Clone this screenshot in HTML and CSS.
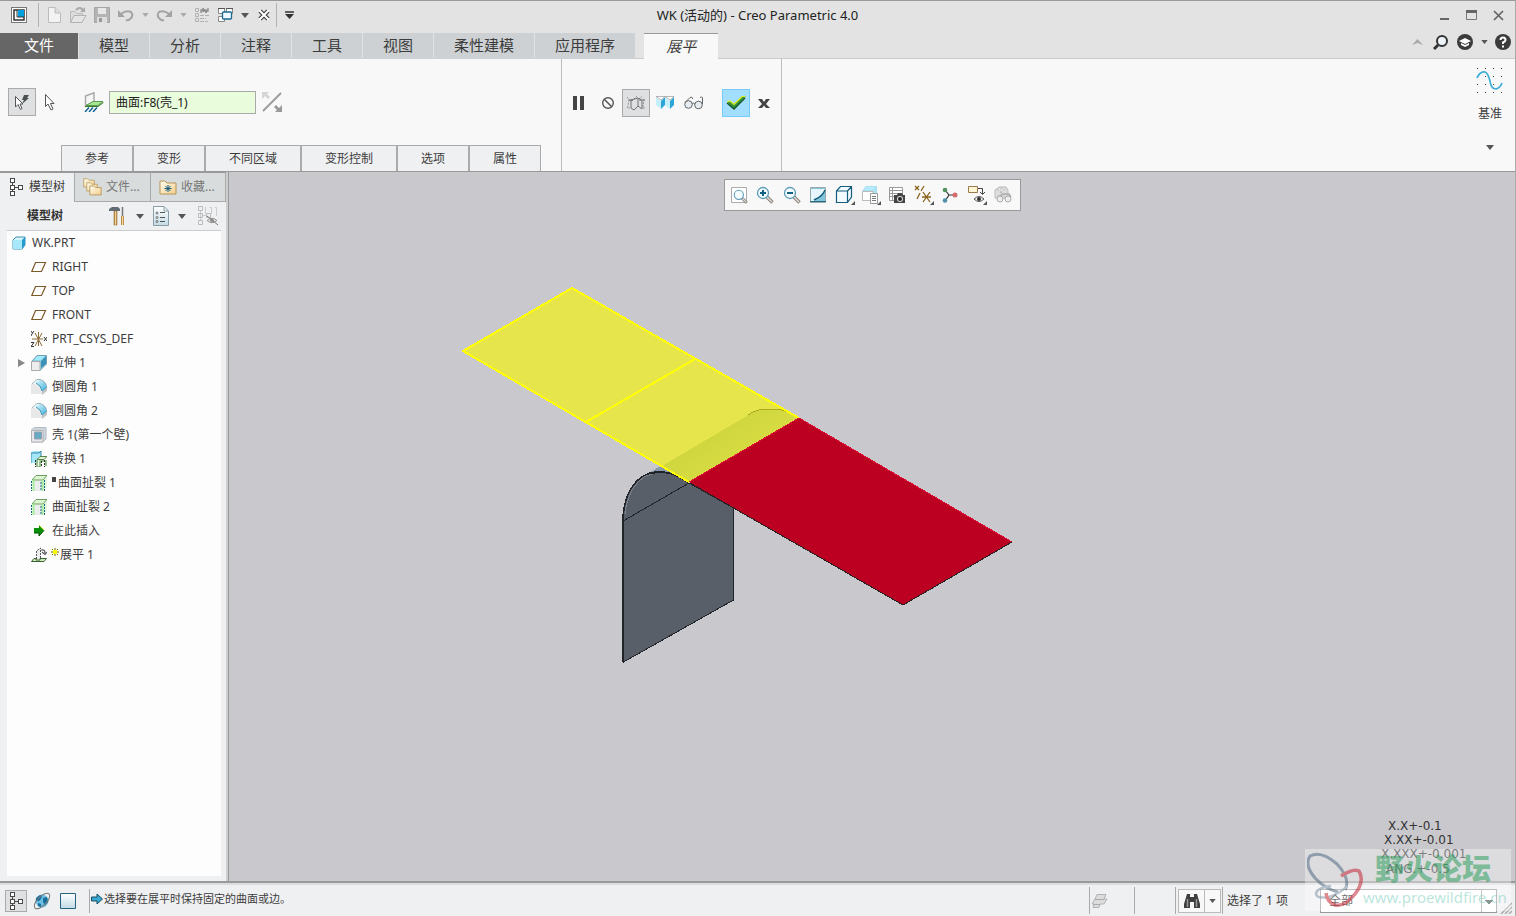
FILE: index.html
```html
<!DOCTYPE html>
<html lang="zh-CN">
<head>
<meta charset="utf-8">
<title>WK (活动的) - Creo Parametric 4.0</title>
<link rel="stylesheet" href="styles.css">
</head>
<body>
<svg class="symbols" aria-hidden="true">
  <defs>
    <linearGradient id="sky" x1="0" y1="0" x2="1" y2="1"><stop offset="0" stop-color="#e8fbff"/><stop offset="1" stop-color="#3bb0dc"/></linearGradient>
    <linearGradient id="gold" x1="0" y1="0" x2="1" y2="1"><stop offset="0" stop-color="#fffdf0"/><stop offset="1" stop-color="#f3ce8a"/></linearGradient>
    <linearGradient id="pale" x1="0" y1="0" x2="0" y2="1"><stop offset="0" stop-color="#ffffff"/><stop offset="1" stop-color="#c3dbe5"/></linearGradient>
    <linearGradient id="wood" x1="0" y1="0" x2="1" y2="0"><stop offset="0" stop-color="#9c6a25"/><stop offset=".5" stop-color="#f5d59b"/><stop offset="1" stop-color="#a8742e"/></linearGradient>
    <symbol id="down" viewBox="0 0 8 5"><path d="M0 0H8L4 5Z" fill="currentColor"/></symbol>
    <symbol id="tree" viewBox="0 0 16 20"><g fill="#fff" stroke="#484848"><path d="M4.500 4V16M6 10.500H11"/><rect x="2.500" y="1.500" width="4" height="4"/><rect x="2.500" y="8.500" width="4" height="4"/><rect x="10.500" y="8.500" width="4" height="4"/><rect x="2.500" y="14.500" width="4" height="4"/></g></symbol>
    <symbol id="plane" viewBox="0 0 16 16"><path d="M4.500 3.500H14.500L10.500 12.500H.8Z" fill="none" stroke="#7b5b2c" stroke-width="1.200"/></symbol>
    <symbol id="round" viewBox="0 0 16 16"><path d="M0 5H6Q11 7 11 15H0Z" fill="#e8e8e8"/><path d="M11 12L16 8V12L11 16Z" fill="#c4c4c4"/><path d="M4 4L8 .5Q15 1 16 8L11 12Q10 6 4 4" fill="url(#sky)"/><path d="M1 5L6 .5H9Q15 2 15.500 8" fill="none" stroke="#9db2ba"/><path d="M5 4Q10 6 11 12L16 8" fill="none" stroke="#3f9dbc"/></symbol>
    <symbol id="rip" viewBox="0 0 16 16"><path d="M3 5H12V16H3Z" fill="#ececec"/><path d="M11 5L16 1V12L12 16Z" fill="#e4f5de"/><path d="M1 5L5 .5H16L12 5Z" fill="#dff3d5" stroke="#68a45b"/><path d="M2.500 5V16M11.500 5V16" fill="none" stroke="#a4eb9b" stroke-width="2"/><path d="M.5 6V16M10 7V16M13.500 5V16" stroke="#156388" stroke-dasharray="2 1"/></symbol>
    <symbol id="lens" viewBox="0 0 18 18"><path d="M10.500 10.500L16.500 16.500" stroke="#8b8178" stroke-width="3.500"/><path d="M10.500 10.500L16 16" stroke="#ddd" stroke-width="1.500"/><circle cx="7" cy="7" r="5.500" fill="#f4fcff" stroke="#5b9bb5" stroke-width="1.300"/></symbol>
    <symbol id="folder" viewBox="0 0 16 14"><path d="M1 2H6L8 4H15V13H1Z" fill="url(#gold)" stroke="#b39354"/></symbol>
  </defs>
</svg>
<div class="app">
  <header class="titlebar">
    <div class="quick">
      <button class="logo" aria-label="系统菜单"><svg width="16" height="16" viewBox="0 0 16 16"><rect x=".5" y=".5" width="15" height="15" fill="#fff" stroke="#777"/><path d="M3 3H13V13H3Z" fill="#fff" stroke="#333" stroke-width="1.500"/><path d="M7 3H13V10H7Z" fill="#009fdf"/><path d="M6 3V10H13" stroke="#333" fill="none"/></svg></button>
      <i class="sep"></i>
      <button class="tool" aria-label="新建"><svg width="16" height="18" viewBox="0 0 16 18"><path d="M2.500 1.500H9L14.500 7V16.500H2.500Z" fill="#f3f3f3" stroke="#bcbcbc"/><path d="M9 1V7H14" fill="#ddd" stroke="#bcbcbc"/></svg></button>
      <button class="tool" aria-label="打开"><svg width="18" height="18" viewBox="0 0 18 18"><path d="M1.500 16V5.500H6L8 7.500H13.500V9" fill="#ddd" stroke="#b8b8b8"/><path d="M1.500 16.500L5 9.500H17L13 16.500Z" fill="#e5e5e5" stroke="#b2b2b2"/><path d="M7 4Q11 0 14 4" fill="none" stroke="#aaa" stroke-width="2"/><path d="M16 1V6H11Z" fill="#aaa"/></svg></button>
      <button class="tool" aria-label="保存"><svg width="16" height="16" viewBox="0 0 16 16"><path d="M.5 .5H15.500V15.500H.5Z" fill="#b4b4b4" stroke="#a5a5a5"/><path d="M4 1H12V7H4Z" fill="#e8e8e8"/><path d="M3 10H13V16H3Z" fill="#ddd"/><path d="M5 11H8V15H5Z" fill="#999"/></svg></button>
      <button class="tool" aria-label="撤消"><svg width="18" height="14" viewBox="0 0 18 14"><path d="M4 6Q9 2 14 4Q17 8 13 11Q11 13 9 12" fill="none" stroke="#a3a3a3" stroke-width="2"/><path d="M1 2V9H8Z" fill="#a3a3a3"/></svg></button>
      <button class="drop faint" aria-label="撤消列表"><svg width="7" height="4"><use href="#down"/></svg></button>
      <button class="tool" aria-label="重做"><svg width="18" height="14" viewBox="0 0 18 14"><path d="M14 6Q9 2 4 4Q1 8 5 11Q7 13 9 12" fill="none" stroke="#a3a3a3" stroke-width="2"/><path d="M17 2V9H10Z" fill="#a3a3a3"/></svg></button>
      <button class="drop faint" aria-label="重做列表"><svg width="7" height="4"><use href="#down"/></svg></button>
      <button class="tool" aria-label="重新生成"><svg width="16" height="16" viewBox="0 0 16 16"><g fill="none" stroke="#b2b2b2"><path d="M1.500 1.500H4.500V4.500H1.500ZM1.500 6.500H4.500V9.500H1.500ZM1.500 11.500H4.500V14.500H1.500Z"/><path d="M6 8.500H15M6 11.500H12M6 14.500H14" stroke-dasharray="4 1"/><path d="M7 6V3H10M8.500 1L10.500 3L8.500 5M14 1V4H11M12.500 2.500L11 4L12.500 6" stroke="#888" stroke-width="1.300"/></g></svg></button>
      <button class="tool" aria-label="窗口"><svg width="16" height="16" viewBox="0 0 16 16"><path d="M.5 1.500H6.500V6.500H.5ZM8.500 1.500H14.500V6.500H8.500ZM.5 9.500H6.500V14.500H.5Z" fill="#fff" stroke="#888"/><path d="M0 1.500H7M8 1.500H15" stroke="#555"/><rect x="4.500" y="5" width="9" height="7" rx="1" fill="#eefaff" stroke="#196b93" stroke-width="1.300"/></svg></button>
      <button class="drop" aria-label="窗口列表"><svg width="8" height="5"><use href="#down"/></svg></button>
      <button class="tool" aria-label="关闭窗口"><svg width="12" height="12" viewBox="0 0 12 12"><path d="M2 2L10 10M10 2L2 10" stroke="#444" stroke-width="4.500"/><path d="M1.500 1.500L10.500 10.500M10.500 1.500L1.500 10.500" stroke="#fff" stroke-width="2"/></svg></button>
      <i class="sep"></i>
      <button class="tool" aria-label="自定义"><svg width="9" height="8" viewBox="0 0 9 8"><path d="M0 1H9" stroke="#333" stroke-width="1.500"/><path d="M0 3H9L4.500 8Z" fill="#333"/></svg></button>
    </div>
    <h1 class="title">WK (活动的) - Creo Parametric 4.0</h1>
    <div class="window-buttons">
      <button aria-label="最小化"><svg width="11" height="11"><path d="M1 9H10" stroke="#666" stroke-width="2"/></svg></button>
      <button aria-label="最大化"><svg width="11" height="10"><path d="M.5 1V9.500H10.500V1" fill="none" stroke="#777"/><path d="M0 1.500H11" stroke="#666" stroke-width="3"/></svg></button>
      <button aria-label="关闭"><svg width="11" height="11"><path d="M1 1L10 10M10 1L1 10" stroke="#666" stroke-width="1.700"/></svg></button>
    </div>
  </header>

  <nav class="tabs">
    <button class="tab file">文件</button>
    <button class="tab">模型</button>
    <button class="tab">分析</button>
    <button class="tab">注释</button>
    <button class="tab">工具</button>
    <button class="tab">视图</button>
    <button class="tab">柔性建模</button>
    <button class="tab">应用程序</button>
    <button class="tab current">展平</button>
    <div class="helpers">
      <button aria-label="最小化功能区"><svg width="11" height="6"><path d="M0 6L5.500 0L11 6L5.500 4Z" fill="#aaa"/></svg></button>
      <button aria-label="搜索"><svg width="16" height="16" viewBox="0 0 16 16"><path d="M1 15L5 11" stroke="#333" stroke-width="3"/><circle cx="9" cy="7" r="5" fill="#eef5fa" stroke="#333" stroke-width="2"/></svg></button>
      <button aria-label="学习"><svg width="16" height="16" viewBox="0 0 16 16"><circle cx="8" cy="8" r="8" fill="#3b3b3b"/><path d="M2 7L8 4L14 7L8 10Z" fill="#fff"/><path d="M4 9V11L8 13L12 11V9L8 11Z" fill="#fff"/></svg></button>
      <button class="narrow" aria-label="更多"><svg width="7" height="4"><use href="#down"/></svg></button>
      <button aria-label="帮助"><svg width="16" height="16" viewBox="0 0 16 16"><circle cx="8" cy="8" r="8" fill="#3b3b3b"/><path d="M5.500 6Q5.500 3.500 8 3.500T10.500 6Q10.500 7.500 8 8.500V10" fill="none" stroke="#fff" stroke-width="2"/><path d="M8 11.500V13.500" stroke="#fff" stroke-width="2"/></svg></button>
    </div>
  </nav>

  <section class="ribbon">
    <div class="feature">
      <div class="collector">
        <button class="square pressed" aria-label="自动选择"><svg width="18" height="18" viewBox="0 0 18 18"><path d="M2.500 3.500V14L5 11.500L7.500 16.500L9 15.500L7 11H10Z" fill="#fff" stroke="#555"/><path d="M11 2H16L14 5H16L9 11L11 7H9Z" fill="#4a4f52"/></svg></button>
        <button class="square" aria-label="选择"><svg width="12" height="18" viewBox="0 0 12 18"><path d="M1.500 1.500V13.500L4 11L7 17L9 16L6.500 10.500H10Z" fill="#fff" stroke="#555"/></svg></button>
        <label class="field-label" for="surface" aria-label="固定曲面"><svg width="20" height="20" viewBox="0 0 20 20"><path d="M1.500 4L10 .8V10L1.500 14Z" fill="#f6f6f6" stroke="#aaa" stroke-width="1.500"/><path d="M2 13.500L9 9.500H19L14 13.500Z" fill="#a9e893" stroke="#5b9a50"/><path d="M1 14.500H14L19.500 10.500" fill="none" stroke="#3a7d2d"/><path d="M5 15.500L1 20M9 15.500L5 20M13 15.500L9 20" stroke="#126694" stroke-width="1.500"/></svg></label>
        <input class="field" id="surface" type="text" value="曲面:F8(壳_1)">
        <button class="square flip" aria-label="反向"><svg width="20" height="20" viewBox="0 0 20 20"><path d="M1 19L19 1" stroke="#999" stroke-width="1.800"/><path d="M0 0H7L5 2L8 5L6 7L3 4L0 7Z" fill="#d5d5d5"/><path d="M20 20H13L15 18L12 15L14 13L17 16L20 13Z" fill="#999"/></svg></button>
      </div>
      <div class="panels">
        <button>参考</button><button>变形</button><button>不同区域</button><button>变形控制</button><button>选项</button><button>属性</button>
      </div>
    </div>
    <div class="actions">
      <button class="square" aria-label="暂停"><svg width="12" height="14"><path d="M1 0H5V14H1ZM8 0H12V14H8Z" fill="#444"/></svg></button>
      <button class="square" aria-label="无预览"><svg width="14" height="12" viewBox="0 0 14 12"><circle cx="8" cy="6" r="5.300" fill="none" stroke="#555" stroke-width="1.400"/><path d="M4.500 2.500L11.500 9.500" stroke="#555" stroke-width="1.500"/></svg></button>
      <button class="square pressed" aria-label="分离预览"><svg width="20" height="16" viewBox="0 0 20 16"><g fill="none"><path d="M1 2L3 5H7L10 2M3 5L1.500 13H4M10 1L13 4L17 1M18 4L17 13H19" stroke="#999" stroke-dasharray="2 1"/><path d="M5 5V13L8 15L12 11V3L5 5M12 11L16 14V6L13 3M3 5H7M13 5H19" stroke="#666" stroke-width=".9"/></g></svg></button>
      <button class="square" aria-label="附加预览"><svg width="18" height="14" viewBox="0 0 18 14"><path d="M0 1L5 5V13L0 9Z" fill="#c5effc"/><path d="M5 5L9 1V9L5 13Z" fill="#2da5d7"/><path d="M9 1L14 5V13L9 9Z" fill="#c5effc"/><path d="M14 5L18 1V9L14 13Z" fill="#2da5d7"/><path d="M0 .5H9L5 4ZM9 .5H18L14 4Z" fill="#fff" stroke="#999" stroke-width=".7"/></svg></button>
      <button class="square" aria-label="校验"><svg width="20" height="14" viewBox="0 0 20 14"><g fill="#e5edf3" stroke="#666"><circle cx="4.500" cy="8.500" r="3.800"/><circle cx="14.500" cy="9" r="3.800"/><path d="M8 8Q9.500 6 11 8M1 6.500L6 1.500Q8 0 9 3M18.500 8V2Q18 0 16 1.500" fill="none"/></g></svg></button>
      <button class="square ok" aria-label="确定"><svg width="20" height="16" viewBox="0 0 20 16"><path d="M1 7L4 6L8 9L17 1H20L8 14Z" fill="#33963f"/><path d="M1 8L8 14L19 3" fill="none" stroke="#155223" stroke-width="1.300"/><path d="M1 7L4 6L8 9.500L16 1.500H19.500" fill="none" stroke="#e2ed17" stroke-width="1.200"/></svg></button>
      <button class="square" aria-label="取消"><svg width="12" height="12" viewBox="0 0 12 12"><path d="M0 2H4L6 5L8 2H12L8 7L12 11H8L6 8.500L4 11H0L4 7Z" fill="#444"/></svg></button>
    </div>
    <div class="datum">
      <svg width="28" height="26" viewBox="0 0 28 26"><path d="M1 .5H27M1 8.500H27M1 16.500H27M1 24.500H27" stroke="#444" stroke-dasharray="1 7"/><path d="M1 10Q4 3 9 4Q12 5 14 13Q15 21 20 21Q24 20 26 15" fill="none" stroke="#3bacd6" stroke-width="1.700"/></svg>
      <span>基准</span>
      <button aria-label="基准列表"><svg width="8" height="5"><use href="#down"/></svg></button>
    </div>
  </section>

  <main class="work">
    <aside class="side">
      <div class="side-tabs">
        <button class="side-tab on"><svg width="16" height="20"><use href="#tree"/></svg>模型树</button>
        <button class="side-tab second"><svg width="20" height="20" viewBox="0 0 20 20"><use href="#folder" x="0" y="0" width="12" height="11"/><use href="#folder" x="3" y="4" width="12" height="11"/><use href="#folder" x="6" y="7" width="13" height="12"/></svg>文件...</button>
        <button class="side-tab third"><svg width="18" height="18" viewBox="0 0 18 18"><path d="M1 3H6L8 5H17V16H1Z" fill="url(#gold)" stroke="#b39354"/><path d="M9 7V14M5.500 10.500H12.500M6.500 8L11.500 13M11.500 8L6.500 13" stroke="#155c7c"/></svg>收藏...</button>
      </div>
      <div class="side-head">
        <h2>模型树</h2>
        <button aria-label="设置"><svg width="20" height="20" viewBox="0 0 20 20"><path d="M7 5H10V19H7Z" fill="url(#wood)" stroke="#8a652b" stroke-width=".5"/><path d="M2 3L5 1H11L13 3V5H6L2 5Z" fill="#626b71"/><path d="M15.500 1V11" stroke="#777" stroke-width="1.500"/><path d="M14 10H17V19H14Z" fill="url(#wood)"/></svg></button>
        <button class="caret" aria-label="设置列表"><svg width="8" height="5"><use href="#down"/></svg></button>
        <button aria-label="显示"><svg width="16" height="20" viewBox="0 0 16 20"><path d="M.5 .5H11L15.500 5V19.500H.5Z" fill="url(#pale)" stroke="#899da6"/><path d="M11 1V5H15" fill="none" stroke="#899da6"/><path d="M7 6.500H12M7 11.500H12M7 15.500H12" stroke="#555"/><circle cx="4" cy="7" r="1" fill="none" stroke="#555" stroke-width=".8"/><circle cx="4" cy="11.500" r="1" fill="none" stroke="#555" stroke-width=".8"/><circle cx="4" cy="15.500" r="1" fill="none" stroke="#555" stroke-width=".8"/></svg></button>
        <button class="caret" aria-label="显示列表"><svg width="8" height="5"><use href="#down"/></svg></button>
        <button class="filter" aria-label="隐藏项"><svg width="22" height="20" viewBox="0 0 22 20"><g fill="none" stroke="#ccc"><path d="M3.500 5V15M5 9.500H9M8.500 1V8M12.500 1.500H14.500V8M17.500 1.500H19.500V10"/><path d="M1.500 .5H5.500V4.500H1.500ZM1.500 7.500H5.500V11.500H1.500ZM1.500 14.500H5.500V18.500H1.500ZM9.500 7.500H13.500V11.500H9.500Z" stroke="#bbb"/></g><path d="M10 14.500Q15 10 20 14.500Q15 19 10 14.500" fill="#ddd" stroke="#999"/><circle cx="15" cy="14.500" r="2" fill="#999"/><path d="M10 10L21 19" stroke="#777"/></svg></button>
      </div>
      <ul class="model-tree">
        <li class="root"><svg width="14" height="14" viewBox="0 0 14 14"><path d="M1 4L4 1H13V9L10 13H1Z" fill="#d4f4fc" stroke="#3f90b2"/><path d="M10 4L13 1V9L10 13Z" fill="#269bcd"/><path d="M1 4H10V13H1Z" fill="#a7e9fb"/></svg>WK.PRT</li>
        <li><svg width="16" height="16"><use href="#plane"/></svg>RIGHT</li>
        <li><svg width="16" height="16"><use href="#plane"/></svg>TOP</li>
        <li><svg width="16" height="16"><use href="#plane"/></svg>FRONT</li>
        <li><svg width="16" height="16" viewBox="0 0 16 16"><path d="M1 8H12M4 2L11 15M11 2L4 15M7.500 1V15" stroke="#8c6937"/><path d="M0 0L1.500 2L3 0M1.500 2L0 5M13 6L16 10M16 6L13 10M0 11.500H3L0 15.500H3" fill="none" stroke="#333"/></svg>PRT_CSYS_DEF</li>
        <li class="branch"><button aria-label="展开"><svg width="8" height="8"><path d="M0 0V8L7 4Z" fill="#888"/></svg></button><svg width="16" height="16" viewBox="0 0 16 16"><path d="M1 6L6 .5H15.500V9L9 15.500Z" fill="#8bd2e8" stroke="#76a2af"/><path d="M10 6L15 1V9L10 13Z" fill="#3a92b6"/><path d="M.5 6.500H9V15.500H.5Z" fill="#ededed" stroke="#aaa"/><path d="M3 5L7 1H14L10 5Z" fill="#a2eaff"/></svg>拉伸 1</li>
        <li><svg width="16" height="16"><use href="#round"/></svg>倒圆角 1</li>
        <li><svg width="16" height="16"><use href="#round"/></svg>倒圆角 2</li>
        <li><svg width="16" height="16" viewBox="0 0 16 16"><path d="M.5 3L3 .5H15V12L12 15H.5Z" fill="#ccd4dd" stroke="#b7bdc4"/><path d="M.5 3.500H12V15H.5Z" fill="#e8e8ec" stroke="#b3b3b3"/><path d="M3.500 5H10.500V12H3.500Z" fill="#65abc5" stroke="#9a9fad"/></svg>壳 1(第一个壁)</li>
        <li><svg width="16" height="16" viewBox="0 0 16 16"><path d="M0 2L2 0H10V9H7V12H0Z" fill="#a5e6fa"/><path d="M8 2L10 0V8H8M0 12V2H8" fill="none" stroke="#3189a7"/><path d="M6 8.500L9 5.500H16L13 8.500Z" fill="#dff3d5" stroke="#58854e"/><path d="M6 9V16H9V10H15V15" fill="none" stroke="#7aae6c" stroke-width="1.500"/><path d="M4.500 9V16M10.500 10V16M13.500 9V16" stroke="#333" stroke-dasharray="2 1"/></svg>转换 1</li>
        <li><svg width="16" height="16"><use href="#rip"/></svg><i class="mark"></i>曲面扯裂 1</li>
        <li><svg width="16" height="16"><use href="#rip"/></svg>曲面扯裂 2</li>
        <li><svg width="16" height="16" viewBox="0 0 16 16"><path d="M3 5H8V2L13 7.500L8 13V10H3Z" fill="#099009"/><path d="M3 10H8V13L13 7.500" fill="none" stroke="#055205"/><path d="M8 2L13 7" stroke="#dae426"/></svg>在此插入</li>
        <li><svg width="16" height="16" viewBox="0 0 16 16"><path d="M5.500 12V4L9.500 1V12" fill="#eee" stroke="#555" stroke-dasharray="2 1"/><path d="M.5 14.500L3 11.500H5V13H9V11.500H15.500L13 14.500Z" fill="#cde9c4" stroke="#38632f"/><path d="M10 3Q14 2 14 6M11 5L14 7.500L16 5" fill="none" stroke="#555" stroke-width="1.200"/></svg><svg class="star" width="8" height="8"><path d="M4 0V8M0 4H8M1 1L7 7M7 1L1 7" stroke="#6d6d00"/><path d="M2 2H6V6H2Z" fill="#ff0"/></svg>展平 1</li>
      </ul>
    </aside>
    <section class="viewport" aria-label="图形窗口">
      <svg class="scene" viewBox="229 172 1286 709" preserveAspectRatio="xMidYMid meet">
        <defs><linearGradient id="bend" gradientUnits="userSpaceOnUse" x1="704" y1="439" x2="724" y2="470"><stop offset="0" stop-color="#cfd63e"/><stop offset="1" stop-color="#d8dc43"/></linearGradient></defs>
        <g class="model">
        <path d="M649 473L662 465L690 482Z" fill="#8999ac"/>
        <path d="M689 483L733.500 508V600L623.500 662V518C624 494 636 474 655 473C671 471 679 477 689 483Z" fill="#585f69" stroke="#202328"/>
        <path d="M623 662V518C624 494 636 474 655 472Q672 470 689 483" fill="none" stroke="#202328" stroke-width="1.500"/>
        <path d="M625 514C627 493 638 477 652 474" fill="none" stroke="#8b949f" stroke-width=".7"/>
        <path d="M623 521L689 483" stroke="#202328"/>
        <path d="M572 288L799 418L689 482L463 351Z" fill="#e6e54c"/>
        <path d="M662 466L750 414Q757 409 766 409H778Q785 410 799 418L689 482Z" fill="url(#bend)"/>
        <path d="M748 415Q757 409 766 409H778Q785 410 792 414" fill="none" stroke="#aaa920"/>
        <path d="M799 418L572 288L463 351L689 482M586 422L695 359" fill="none" stroke="#ff0" stroke-width="2"/>
        <path d="M799 418L1012 542L903 605L689 482Z" fill="#bb0022"/>
        <path d="M689 482L799 418L1012 542" fill="none" stroke="#df0c35"/>
        <path d="M690 483L903 605L1012 542" fill="none" stroke="#292024"/>
        </g>
        <g class="tolerances"><text x="1388" y="830">X.X+-0.1</text><text x="1384" y="844">X.XX+-0.01</text><text x="1381" y="858">X.XXX+-0.001</text><text x="1386" y="873">ANG.+-0.5</text></g>
      </svg>
      <div class="view-tools">
        <button aria-label="重新调整"><svg width="18" height="18" viewBox="0 0 18 18"><path d="M1.500 1.500H16.500V16.500H1.500Z" fill="#fff" stroke="#aaa"/><use href="#lens" x="3" y="3" width="15" height="15"/></svg></button>
        <button aria-label="放大"><svg width="18" height="18" viewBox="0 0 18 18"><use href="#lens"/><path d="M7 4V10M4 7H10" stroke="#126083" stroke-width="2"/></svg></button>
        <button aria-label="缩小"><svg width="18" height="18" viewBox="0 0 18 18"><use href="#lens"/><path d="M4 7H10" stroke="#126083" stroke-width="2"/></svg></button>
        <button aria-label="重画"><svg width="16" height="16" viewBox="0 0 16 16"><path d="M.5 .5H15.500V15.500H.5Z" fill="#84c5db" stroke="#9aa"/><path d="M1 2H15Q13 8 8 11L4 14H1Z" fill="#e5f7fc"/><path d="M15 3Q13 8 8 11L4 13" fill="none" stroke="#115b79" stroke-width="1.400"/><path d="M0 14.500H16" stroke="#246b85"/></svg></button>
        <button aria-label="显示样式"><svg width="20" height="20" viewBox="0 0 20 20"><path d="M1.500 6L5.500 1.500H16.500V12L12.500 17.500H1.500ZM1.500 6H12.500V17M12.500 6L16 2" fill="#f2fbff" stroke="#155d7c" stroke-width="1.200"/><path d="M20 16V20H16Z" fill="#555"/></svg></button>
        <button aria-label="已保存方向"><svg width="20" height="20" viewBox="0 0 20 20"><path d="M1 6L5 1H16V12L12 16H1Z" fill="#a8e0f2"/><path d="M1.500 6.500H12V15.500H1.500Z" fill="#fff" stroke="#bbb"/><path d="M3 5L6 2H15L12 5Z" fill="#b5ecff"/><path d="M9.500 8.500H16.500V18.500H9.500Z" fill="#fff" stroke="#999"/><path d="M11 11.500H15M11 13.500H15M11 15.500H15" stroke="#777"/><path d="M20 16V20H16Z" fill="#555"/></svg></button>
        <button aria-label="视图管理器"><svg width="18" height="18" viewBox="0 0 18 18"><path d="M1.500 1.500H14.500V14.500H1.500ZM1 4.500H14M1 7.500H14M1 10.500H14M4.500 1V14" fill="#fff" stroke="#999"/><path d="M6 9H9L10 7H14L15 9H17V17H6Z" fill="#444"/><circle cx="12" cy="13" r="3" fill="#ddd"/><circle cx="12" cy="13" r="2" fill="#222"/></svg></button>
        <button aria-label="基准显示"><svg width="20" height="20" viewBox="0 0 20 20"><path d="M1 1L5 5M5 1L1 5M10 1L7 6M6 8L3 14M8 12H17M9 7L16 17M16 7L9 17" stroke="#8a631c" stroke-width="1.300"/><path d="M20 16V20H16Z" fill="#555"/></svg></button>
        <button aria-label="旋转中心"><svg width="16" height="16" viewBox="0 0 16 16"><path d="M3 3L7 8L3 14M7 8H14" fill="none" stroke="#333" stroke-width="1.200"/><circle cx="3" cy="3" r="2.300" fill="#50935b"/><circle cx="13" cy="8" r="2.500" fill="#d56b6b"/><circle cx="3" cy="13.500" r="2.300" fill="#4f8fb0"/></svg></button>
        <button aria-label="注释显示"><svg width="20" height="20" viewBox="0 0 20 20"><path d="M1.500 1.500H10.500V7.500H1.500Z" fill="#fff4d3" stroke="#997c4c"/><path d="M11 3.500H15.500V9M13 7L15.500 9.500L18 7" fill="none" stroke="#444"/><path d="M7 14Q12 9 17 14Q12 19 7 14" fill="#eee" stroke="#555"/><circle cx="12" cy="14" r="2" fill="#333"/><path d="M20 16V20H16Z" fill="#555"/></svg></button>
        <button aria-label="透视图"><svg width="18" height="18" viewBox="0 0 18 18"><path d="M1 4L5 1H12L14 4V12H1Z" fill="#ddd" stroke="#bbb"/><path d="M3 3L12 11M11 3L3 11M7 1V12" stroke="#bbb" stroke-dasharray="2 2"/><path d="M6 10L9 8H15L17 11" fill="none" stroke="#aaa" stroke-width="1.500"/><circle cx="6" cy="13" r="3" fill="#eee" stroke="#aaa"/><circle cx="14" cy="13" r="3" fill="#eee" stroke="#aaa"/></svg></button>
      </div>
    </section>
  </main>

  <footer class="status">
    <button class="status-button pressed" aria-label="模型树"><svg width="16" height="20"><use href="#tree"/></svg></button>
    <button class="status-button globe" aria-label="浏览器"><svg width="18" height="18" viewBox="0 0 18 18"><circle cx="9" cy="9" r="6.500" fill="#6bbfe3"/><path d="M3 6L7 3L9 4L8 7L6 9L3 9ZM10 6L14 5L15 10L12 13L10 10ZM5 11L8 12L8 15L5 14Z" fill="#196f9b"/><ellipse cx="9" cy="9" rx="10" ry="4.500" fill="none" stroke="#777" transform="rotate(-45 9 9)"/></svg></button>
    <button class="status-button" aria-label="全屏"><svg width="16" height="16"><path d="M.5 .5H15.500V15.500H.5Z" fill="url(#pale)" stroke="#27627f"/></svg></button>
    <div class="message"><svg width="12" height="12" viewBox="0 0 12 12"><path d="M.5 4H6V1L11.500 6L6 11V8H.5Z" fill="#39a8cf" stroke="#174e66"/></svg><span>选择要在展平时保持固定的曲面或边。</span></div>
    <div class="cell print"><svg width="18" height="16" viewBox="0 0 18 16"><path d="M6 1.500H15L13 6H16L13 11H9L8 14.500H2L3 11H1L4 6Z" fill="#dcdcdc" stroke="#b2b2b2"/><path d="M4 6.500H13M3 11.500H9" stroke="#aaa"/></svg></div>
    <div class="cell blank"></div>
    <div class="cell find">
      <button aria-label="查找"><svg width="18" height="16" viewBox="0 0 18 16"><path d="M4 1H7V4H11V1H14L17 11V15H11V9H7V15H1V11Z" fill="#3e3e3e"/><path d="M4.500 6V14M13.500 6V14" fill="none" stroke="#999" stroke-width="1.500"/></svg></button>
      <button class="find-drop" aria-label="查找列表"><svg width="7" height="4"><use href="#down"/></svg></button>
    </div>
    <div class="cell selected">选择了 1 项</div>
    <select class="scope" aria-label="选择过滤器"><option>全部</option></select>
    <svg class="grip" width="12" height="12"><path d="M1 12L12 1M5 12L12 5M9 12L12 9" stroke="#aaa" stroke-width="1.500"/></svg>
  </footer>
  <div class="watermark">
    <svg width="58" height="60" viewBox="0 0 58 60"><path d="M38 39Q44 28 30 13Q14 -1 3 5Q-3 14 8 27Q18 38 31 41" fill="none" stroke="#506982" stroke-width="3"/><path d="M24 35Q9 37 9 43Q10 48 22 46Q34 42 40 35" fill="none" stroke="#8296a9" stroke-width="2.500"/><path d="M34 25Q46 17 52 20Q58 30 48 43Q38 56 28 54Q20 51 19 42" fill="none" stroke="#c52836" stroke-width="3.500"/></svg>
    <div class="mark-words"><strong>野火论坛</strong><span>www.proewildfire.cn</span></div>
  </div>
</div>
</body>
</html>
```
FILE: styles.css
```css
* { box-sizing: border-box; }
body { margin: 0; color: #3c3c3c; font: 12px/16px "Noto Sans", "Noto Sans CJK SC", sans-serif; }
button, input, select { margin: 0; padding: 0; border: 0; background: none; color: inherit; font: inherit; }
button { display: inline-flex; align-items: center; justify-content: center; flex: none; }
svg { display: block; flex: none; }
h1, h2, ul { margin: 0; padding: 0; }
.symbols { position: absolute; width: 0; height: 0; }
.app { position: relative; display: flex; flex-direction: column; min-height: 100vh; border-top: 1px solid #999; border-right: 1px solid #aaa; background: #e3e3e3; }

.titlebar { display: grid; grid-template-columns: 1fr auto 1fr; align-items: center; height: 32px; flex: none; padding-bottom: 4px; }
.quick { display: flex; align-items: center; height: 28px; }
.logo { width: 38px; }
.sep { width: 1px; height: 24px; background: #b1b1b1; }
.logo + .sep { margin-right: 3px; }
.tool { width: 24px; height: 24px; }
.drop { width: 14px; height: 24px; color: #555; }
.faint { color: #aaa; }
.title { color: #222; font-size: 13px; font-weight: 400; line-height: 20px; }
.window-buttons { display: flex; justify-content: flex-end; padding-right: 3px; }
.window-buttons button { width: 27px; height: 20px; }

.tabs { display: flex; align-items: stretch; gap: 1px; height: 26px; flex: none; box-shadow: inset 0 -1px #ccc; }
.tab { padding: 0 20px 2px; background: #cdd1d3; font-size: 15px; line-height: 20px; }
.tab.file { padding: 0 24px 2px; background: #666; color: #fff; }
.tab.current { margin-left: 8px; padding: 0 22px 2px; border-top: 1px solid #999; background: #f8f8f8; font-style: italic; }
.helpers { display: flex; align-items: center; margin-left: auto; padding-bottom: 8px; color: #555; }
.helpers button { width: 24px; height: 18px; }
.helpers .narrow { width: 14px; }

.ribbon { display: flex; height: 113px; flex: none; border-bottom: 1px solid #999; background: #f8f8f8; }
.feature { display: flex; flex-direction: column; justify-content: space-between; width: 562px; border-right: 1px solid #bcbcbc; }
.collector { display: flex; align-items: center; padding: 29px 0 0 8px; }
.square { width: 28px; height: 28px; border: 1px solid transparent; }
.pressed { border: 1px solid #aaa; background: #dfe0e2; }
.field-label { margin: 0 5px 0 20px; }
.field { width: 147px; height: 23px; padding: 0 6px 1px; border: 1px solid #aaa; background: #e9fcdb; color: #222; }
.flip { margin-left: 2px; }
.panels { display: flex; padding-left: 61px; }
.panels button { height: 26px; padding: 0 23px; border: 1px solid #aaa; border-bottom: 0; background: #eff0f2; }
.actions { display: flex; width: 220px; padding: 30px 0 0 2px; border-right: 1px solid #bcbcbc; gap: 1px; }
.ok { margin-left: 13px; border-color: #78caf7; background: #a2deff; }
.ok + .square { margin-left: -1px; }
.datum { display: flex; flex-direction: column; align-items: center; margin-left: auto; padding: 9px 11px 0 0; }
.datum span { margin-top: 12px; }
.datum button { margin-top: 18px; height: 14px; color: #555; }

.work { display: flex; flex: 1; min-height: 0; }
.side { display: flex; flex-direction: column; width: 229px; flex: none; padding-bottom: 5px; border-right: 1px solid #999; background: #eff0f2; box-shadow: inset -2px 0 #cdcfcf; }
.side-tabs { display: grid; grid-template-columns: 74px 76px 76px; height: 30px; margin-right: 2px; }
.side-tab { justify-content: flex-start; gap: 5px; padding: 0 0 1px 8px; }
.side-tab:not(.on) { border: 1px solid #aaa; border-top-color: #999; border-right: 0; background: #d8dcdc; color: #777; }
.side-tab.on { border-top: 1px solid #999; }
.side-tab.second { gap: 3px; }
.side-tab.third { border-right: 1px solid #aaa; gap: 4px; }
.side-head { display: flex; align-items: center; height: 29px; margin: 0 7px; padding-left: 20px; border-bottom: 1px solid #ccc; color: #555; }
.side-head h2 { width: 80px; color: #333; font-size: 12px; font-weight: 600; }
.side-head .caret { width: 26px; }
.side-head .filter { margin-left: 2px; }
.model-tree { flex: 1; margin: 0 7px; background: #fdfdfd; list-style: none; }
.model-tree li { display: flex; align-items: center; gap: 5px; height: 24px; padding-left: 24px; }
.model-tree .root { padding-left: 5px; gap: 6px; }
.model-tree .branch { padding-left: 10px; }
.model-tree .branch button { width: 9px; }
.mark { width: 4px; height: 5px; margin: -8px -3px 0 0; background: #444; }
.star { margin: -6px -4px 0 -1px; }

.viewport { position: relative; flex: 1; min-width: 0; background: #c9c8cd; }
.scene { position: absolute; inset: 0; width: 100%; height: 100%; }
.model { shape-rendering: crispEdges; }
.tolerances { fill: #333; font: 12px "DejaVu Sans", sans-serif; }
.view-tools { position: absolute; top: 7px; left: 495px; display: flex; align-items: center; justify-content: space-between; width: 297px; height: 32px; padding: 0 4px 0 1px; border: 1px solid #999; background: #f8f8f8; }
.view-tools button { width: 26px; height: 28px; }

.status { display: flex; align-items: center; height: 35px; flex: none; padding: 2px 3px 0 5px; border-top: 2px solid #999; background: #eff0f2; box-shadow: inset 0 2px #dcdddf; }
.status-button { width: 22px; height: 22px; margin-right: 4px; }
.message { display: flex; align-items: center; flex: 1; gap: 1px; height: 24px; margin-left: 6px; padding: 0 0 3px 1px; border-left: 1px solid #aaa; font-size: 11px; }
.cell { display: flex; align-items: center; height: 27px; border-left: 1px solid #aaa; }
.print { width: 45px; padding-left: 1px; }
.blank { width: 41px; }
.find { width: 47px; padding-left: 2px; }
.find button { width: 27px; height: 24px; border: 1px solid #bbb; background: #f8f8f8; }
.find .find-drop { width: 16px; border-left: 0; color: #555; }
.selected { width: 98px; padding-left: 4px; }
.scope { appearance: none; width: 177px; height: 24px; padding: 0 8px; border: 1px solid #999; background: linear-gradient(#aaa, #aaa) right 14px top / 1px 100% no-repeat, linear-gradient(45deg, transparent 50%, #555 50%) right 7px top 10px / 4px 4px no-repeat, linear-gradient(-45deg, transparent 50%, #555 50%) right 3px top 10px / 4px 4px no-repeat, #fff; color: #222; }
.grip { align-self: flex-end; margin: 0 0 2px 3px; }

.watermark { position: absolute; right: 4px; bottom: 5px; display: flex; width: 206px; height: 62px; background: rgba(255, 255, 255, .36); pointer-events: none; }
.watermark svg { margin: 2px 0 0 2px; opacity: .55; }
.mark-words { display: flex; flex-direction: column; margin-left: -2px; white-space: nowrap; }
.mark-words strong { padding-left: 12px; color: rgba(31, 152, 82, .5); font-size: 29px; line-height: 40px; font-weight: 900; }
.mark-words span { color: rgba(75, 190, 165, .4); font-size: 15px; line-height: 17px; }
```
